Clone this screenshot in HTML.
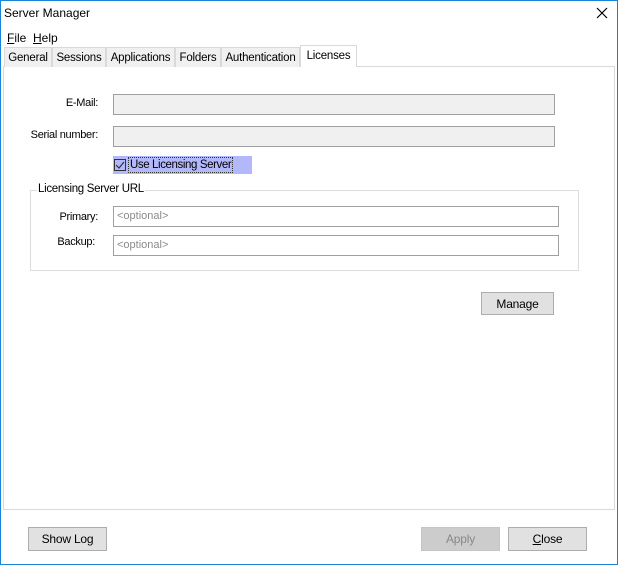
<!DOCTYPE html>
<html><head><style>
*{box-sizing:border-box;margin:0;padding:0}
body{width:618px;height:565px;background:#fff;font-family:"Liberation Sans",sans-serif;font-size:12px;color:#000;position:relative;overflow:hidden}
.a{position:absolute}
.win{left:0;top:0;width:618px;height:565px;border:1px solid #1883d7}
.tab{position:absolute;top:47px;height:20px;background:#f0f0f0;border:1px solid #d9d9d9;border-bottom:none;text-align:center;line-height:20px;font-size:11.5px;letter-spacing:-0.2px}
.lbl{position:absolute;font-size:11px;text-align:right;width:95px;letter-spacing:-0.3px}
.inp{position:absolute;background:#f0f0f0;border:1px solid #a0a0a0}
.inpw{position:absolute;background:#fff;border:1px solid #a0a0a0;color:#8a8a8a;font-size:11px;padding-left:3px;line-height:19px}
.btn{position:absolute;background:#e1e1e1;border:1px solid #adadad;text-align:center;font-size:12px;line-height:22px;letter-spacing:-0.2px}
</style></head><body>
<div class="a win"></div>
<div class="a" style="left:4px;top:6px;font-size:12px">Server Manager</div>
<svg class="a" style="left:596px;top:7px" width="12" height="12"><path d="M1 1L11 11M11 1L1 11" stroke="#000" stroke-width="1.2"/></svg>
<div class="a" style="left:7px;top:31px"><u>F</u>ile</div>
<div class="a" style="left:33px;top:31px"><u>H</u>elp</div>
<div class="a" style="left:3px;top:66px;width:612px;height:444px;border:1px solid #d9d9d9;background:#fff"></div>
<div class="tab" style="left:4px;width:48px">General</div>
<div class="tab" style="left:52px;width:54px">Sessions</div>
<div class="tab" style="left:106px;width:69px">Applications</div>
<div class="tab" style="left:175px;width:46px">Folders</div>
<div class="tab" style="left:221px;width:79px">Authentication</div>
<div class="tab" style="left:300px;top:45px;height:22px;width:57px;background:#fff;line-height:20px">Licenses</div>
<div class="lbl" style="left:3px;top:97px">E-Mail:</div>
<div class="inp" style="left:113px;top:94px;width:442px;height:21px"></div>
<div class="lbl" style="left:3px;top:129px">Serial number:</div>
<div class="inp" style="left:113px;top:126px;width:442px;height:21px"></div>
<div class="a" style="left:113px;top:156px;width:139px;height:18px;background:#b3b8fb"></div>
<div class="a" style="left:114px;top:159px;width:12px;height:12px;border:1px solid #333;background:#b3b8fb"></div>
<svg class="a" style="left:115px;top:160px" width="10" height="10"><path d="M1 5L4 8L9 2" stroke="#333" fill="none" stroke-width="1.2"/></svg>
<div class="a" style="left:128px;top:157px;height:16px;border:1px dotted #333;padding:0 1px;line-height:14px;font-size:11.5px;letter-spacing:-0.4px">Use Licensing Server</div>
<div class="a" style="left:30px;top:190px;width:549px;height:81px;border:1px solid #dcdcdc"></div>
<div class="a" style="left:37px;top:183px;background:#fff;padding:0 1px;font-size:11.5px;letter-spacing:-0.3px">Licensing Server URL</div>
<div class="lbl" style="left:3px;top:211px">Primary:</div>
<div class="inpw" style="left:113px;top:206px;width:446px;height:21px">&lt;optional&gt;</div>
<div class="lbl" style="left:0px;top:236px">Backup:</div>
<div class="inpw" style="left:113px;top:235px;width:446px;height:21px">&lt;optional&gt;</div>
<div class="btn" style="left:481px;top:292px;width:73px;height:23px">Manage</div>
<div class="btn" style="left:28px;top:527px;width:79px;height:24px">Show Log</div>
<div class="btn" style="left:421px;top:527px;width:79px;height:24px;background:#cccccc;border:1px dotted #bfbfbf;color:#888">Apply</div>
<div class="btn" style="left:508px;top:527px;width:79px;height:24px"><u>C</u>lose</div>
</body></html>
